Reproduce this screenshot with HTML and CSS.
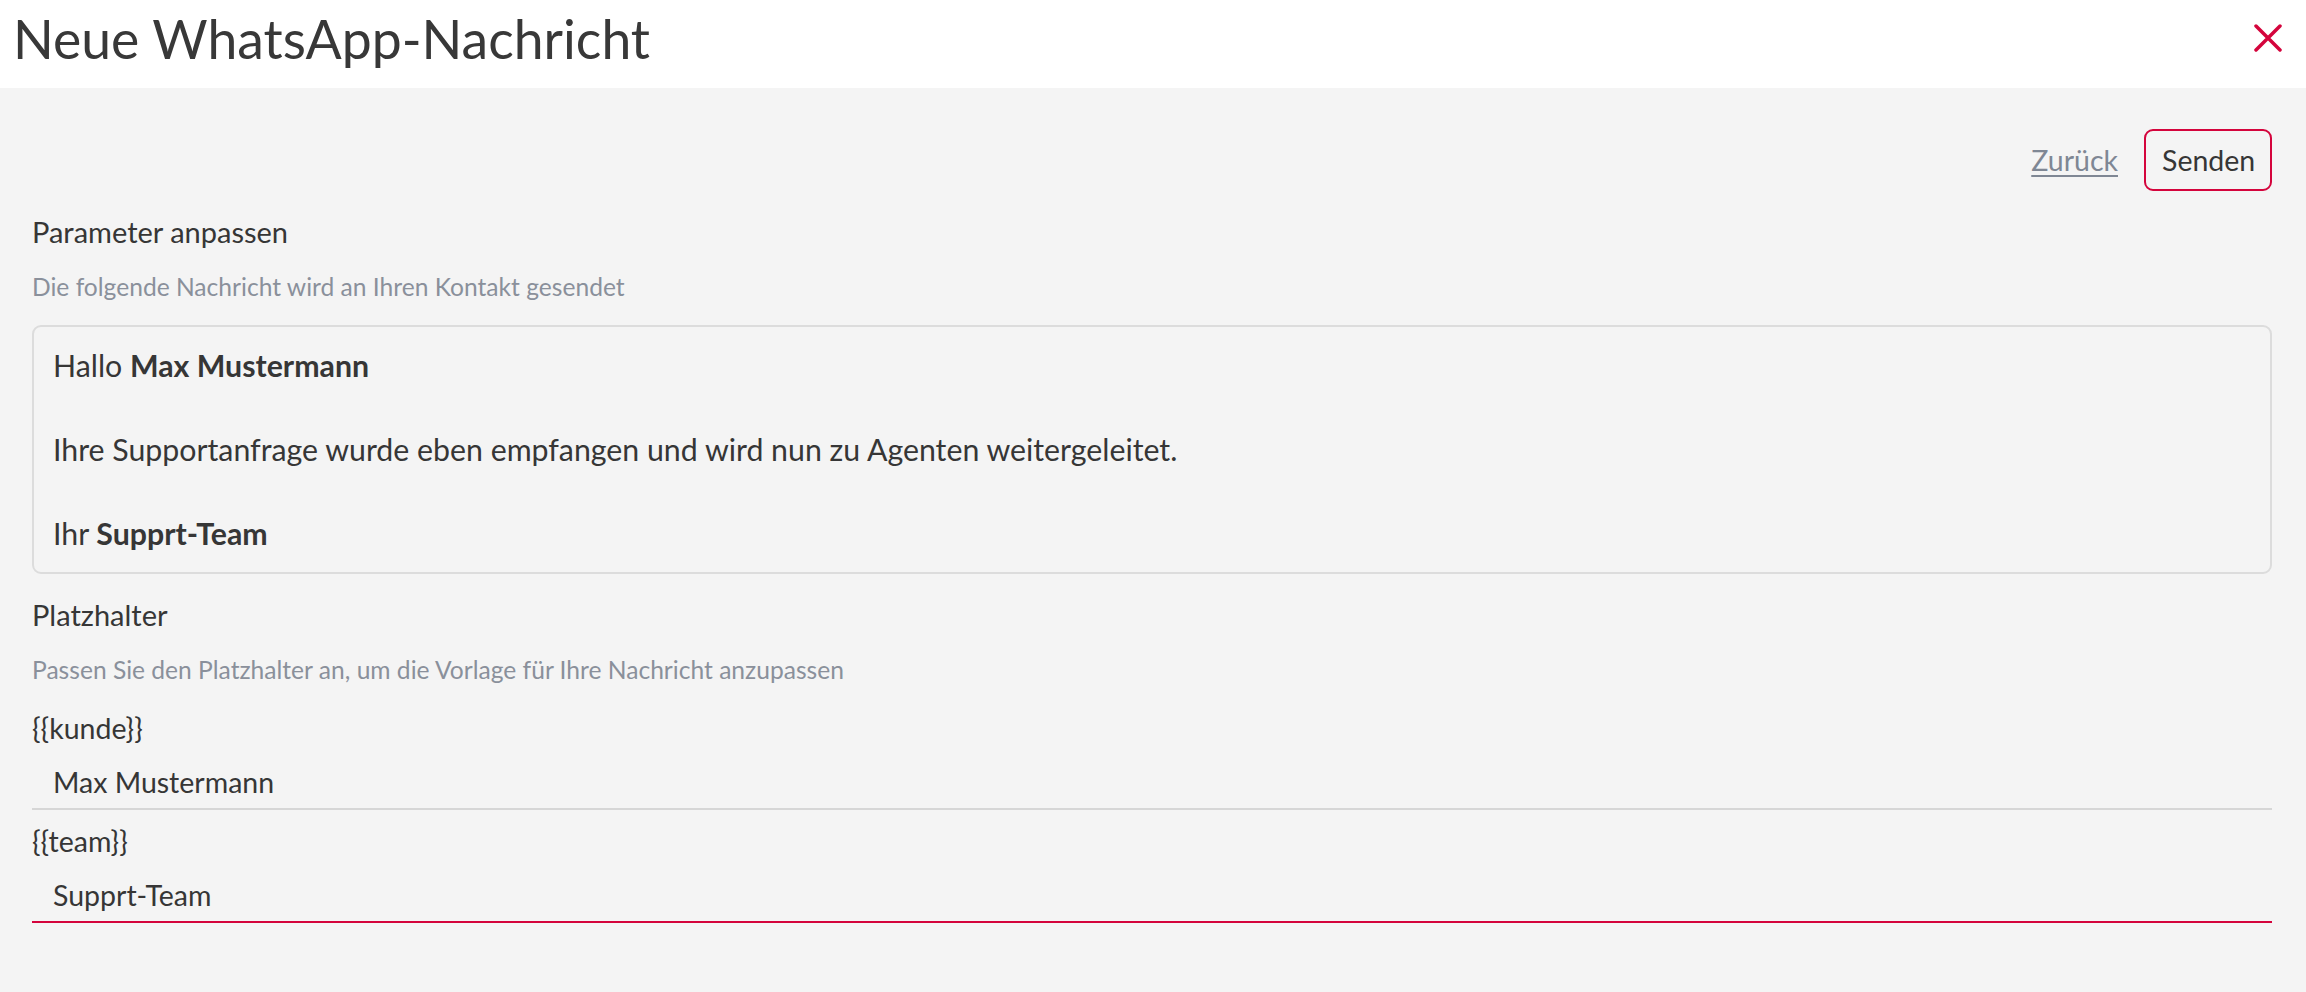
FILE: index.html
```html
<!DOCTYPE html>
<html lang="de">
<head>
<meta charset="utf-8">
<title>Neue WhatsApp-Nachricht</title>
<link rel="stylesheet" href="styles.css">
</head>
<body>
<header class="topbar">
  <h1 class="title">Neue WhatsApp-Nachricht</h1>
  <button class="close" aria-label="Schließen">
    <svg width="28" height="28" viewBox="0 0 28 28"><path d="M2 2 L26 26 M26 2 L2 26" stroke="#d4043c" stroke-width="3.5" stroke-linecap="round" fill="none"/></svg>
  </button>
</header>
<main class="content">
  <div class="actions">
    <a class="back" href="#">Zurück</a>
    <button class="send">Senden</button>
  </div>
  <section class="section">
    <h2 class="label">Parameter anpassen</h2>
    <p class="hint">Die folgende Nachricht wird an Ihren Kontakt gesendet</p>
    <div class="preview">
      <p>Hallo <b>Max Mustermann</b></p>
      <p>Ihre Supportanfrage wurde eben empfangen und wird nun zu Agenten weitergeleitet.</p>
      <p>Ihr <b>Supprt-Team</b></p>
    </div>
  </section>
  <section class="section">
    <h2 class="label">Platzhalter</h2>
    <p class="hint">Passen Sie den Platzhalter an, um die Vorlage für Ihre Nachricht anzupassen</p>
    <div class="fields">
      <div class="field">
        <label class="field-label">{{kunde}}</label>
        <input class="field-input" type="text" value="Max Mustermann">
      </div>
      <div class="field">
        <label class="field-label">{{team}}</label>
        <input class="field-input active" type="text" value="Supprt-Team">
      </div>
    </div>
  </section>
</main>
</body>
</html>
```

FILE: styles.css
```css
* { box-sizing: border-box; }
html, body { margin: 0; padding: 0; }
body {
  background: #f4f4f4;
  font-family: Lato, "Noto Sans", sans-serif;
  color: #363636;
  min-height: 992px;
}
.topbar {
  height: 88px;
  background: #ffffff;
  display: flex;
  align-items: center;
  justify-content: space-between;
  padding: 0 24px 0 13px;
}
.title {
  margin: 0;
  font-weight: 400;
  font-size: 53.5px;
  line-height: 1;
  color: #383838;
  padding-bottom: 10px;
}
.close {
  border: 0;
  background: transparent;
  padding: 0;
  width: 28px;
  height: 28px;
  display: flex;
  margin-bottom: 12px;
}
.content {
  padding: 41px 34px 0 32px;
}
.actions {
  display: flex;
  justify-content: flex-end;
  align-items: center;
  gap: 26px;
}
.back {
  font-size: 28.5px;
  color: #7f8794;
  text-decoration: underline;
  text-underline-offset: 4px;
}
.send {
  font-family: inherit;
  font-size: 28.5px;
  line-height: 34px;
  color: #363636;
  background: transparent;
  border: 2px solid #d4043c;
  border-radius: 9px;
  padding: 12px 16px;
  height: 62px;
  width: 128px;
}
.section { margin-top: 23px; }
.label {
  margin: 0;
  font-weight: 400;
  font-size: 29px;
  line-height: 36px;
  color: #363636;
}
.hint {
  margin: 22px 0 0;
  font-size: 24.6px;
  line-height: 30px;
  color: #8a909b;
}
.preview {
  margin-top: 23px;
  border: 2px solid #dcdcdc;
  border-radius: 9px;
  padding: 17px 19px 18px;
  font-size: 30.3px;
  line-height: 42px;
}
.preview p { margin: 0; }
.preview p + p { margin-top: 42px; }
.preview b { font-weight: 700; }
.fields { margin-top: 26px; display: flex; flex-direction: column; gap: 14px; }
.field { display: flex; flex-direction: column; }
.field-label {
  font-size: 28.5px;
  line-height: 34px;
  color: #363636;
}
.field-input {
  font-family: inherit;
  font-size: 28.5px;
  color: #363636;
  background: transparent;
  border: 0;
  border-bottom: 2px solid #d6d6d6;
  height: 65px;
  padding: 10px 21px 0;
  outline: none;
  width: 100%;
}
.field-input.active { border-bottom-color: #d4043c; }
```
